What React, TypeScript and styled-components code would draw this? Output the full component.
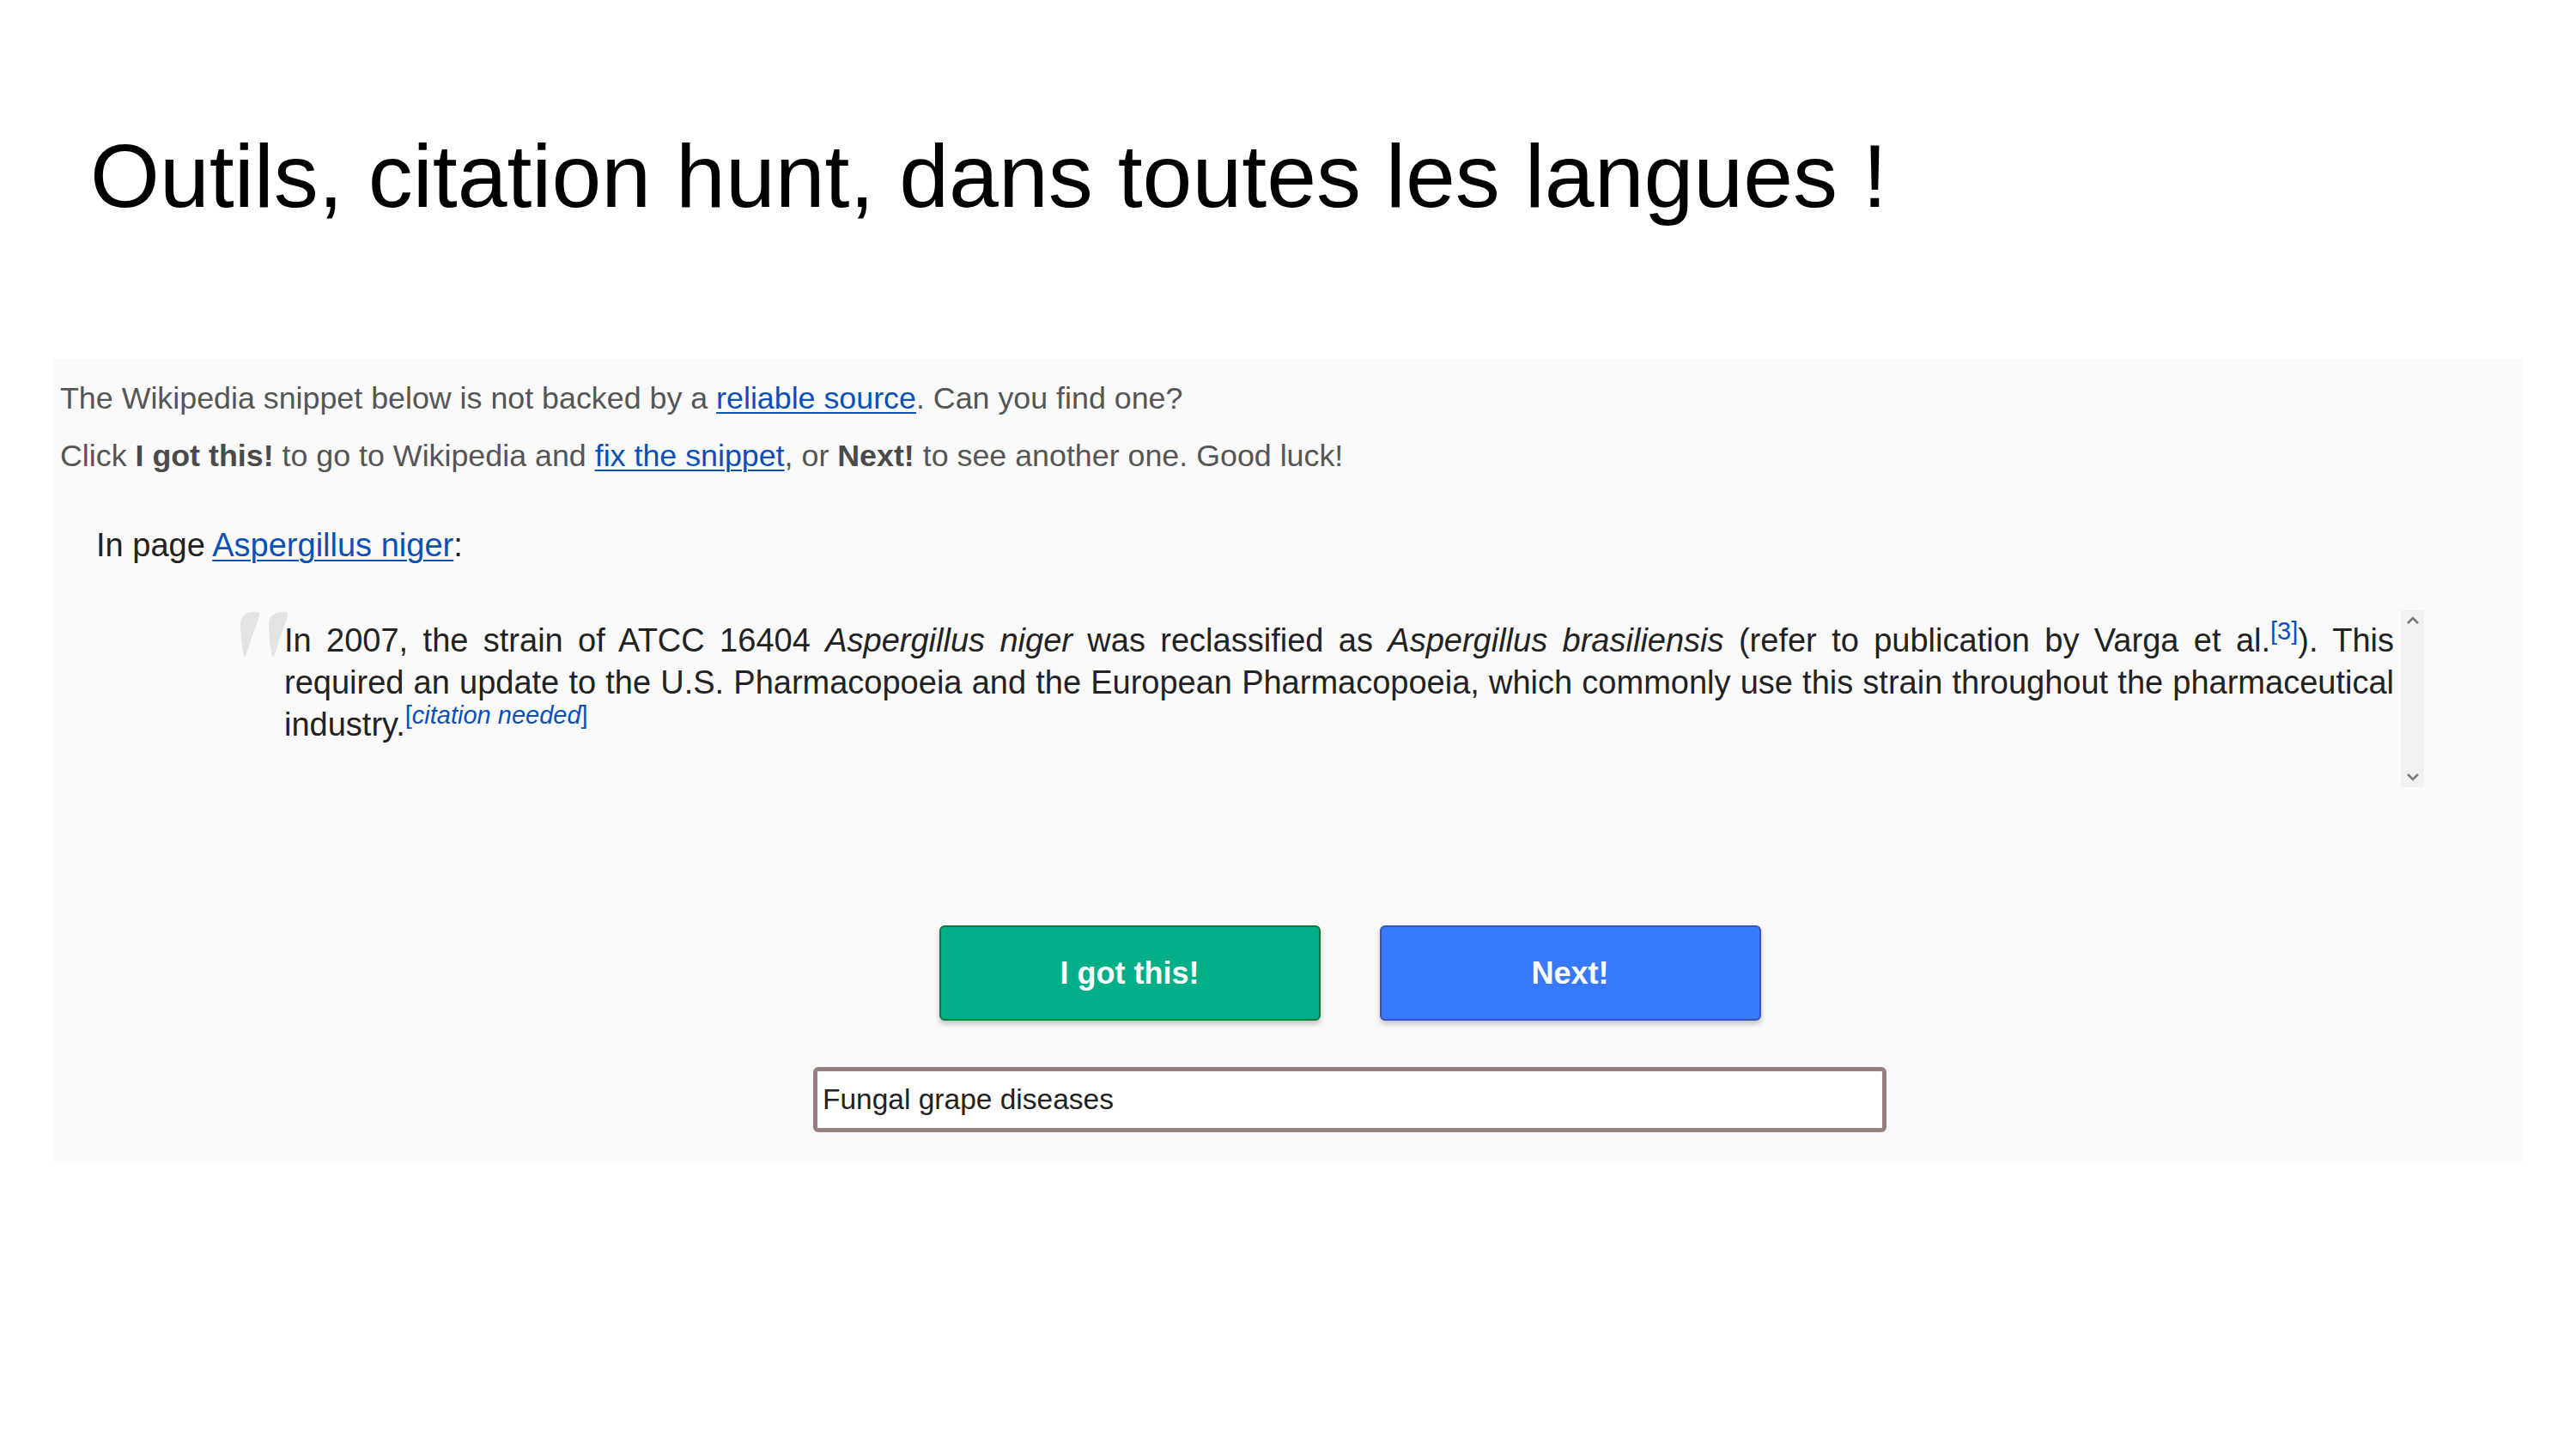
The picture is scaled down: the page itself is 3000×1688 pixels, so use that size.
import React from "react";
import styled, { createGlobalStyle } from "styled-components";

const GlobalStyle = createGlobalStyle`
  html, body {
    margin: 0;
    padding: 0;
    background: #ffffff;
  }
  body {
    font-family: "Liberation Sans", Arial, sans-serif;
  }
`;

const Slide = styled.div`
  width: 3000px;
  height: 1688px;
  box-sizing: border-box;
  padding: 145px 62px 0;
  background: #ffffff;
  font-family: "Liberation Sans", Arial, sans-serif;
`;

const Title = styled.h1`
  margin: 0 0 0 43px;
  font-weight: 400;
  font-size: 104px;
  line-height: 120px;
  color: #000000;
`;

const Panel = styled.section`
  margin-top: 153px;
  background: #fafafa;
  padding: 26px 0 36px 8px;
`;

const Intro = styled.p`
  margin: 0 0 26px;
  font-size: 35.8px;
  line-height: 41px;
  color: #555555;

  b {
    color: #4a4a4a;
  }
`;

const Link = styled.a`
  color: #0b4fb8;
  text-decoration: underline;
  text-underline-offset: 4px;
  text-decoration-thickness: 2px;
`;

const PageLine = styled.p`
  margin: 61px 0 0 42px;
  font-size: 38px;
  line-height: 44px;
  color: #222222;
`;

const SnippetRow = styled.div`
  position: relative;
  display: flex;
  gap: 8px;
  margin: 54px 0 0 261px;
  height: 206px;
`;

const QuoteMark = styled.svg`
  position: absolute;
  left: -56px;
  top: 1px;
  width: 62px;
  height: 54px;
`;

const Quote = styled.blockquote`
  margin: 0;
  width: 2457px;
  height: 206px;
  box-sizing: border-box;
  padding-top: 11px;
  overflow: hidden;
  text-align: justify;
  font-size: 38px;
  line-height: 49px;
  color: #222222;
`;

const Ref = styled.sup`
  font-size: 29px;
  line-height: 0;
  color: #0b4fb8;
  font-style: normal;
`;

const Scrollbar = styled.div`
  width: 27px;
  height: 206px;
  box-sizing: border-box;
  padding: 6px 0;
  background: #f1f1f1;
  display: flex;
  flex-direction: column;
  justify-content: space-between;
  align-items: center;
`;

const Chevron = styled.svg`
  width: 16px;
  height: 11px;
`;

const Controls = styled.div`
  display: flex;
  flex-direction: column;
  align-items: center;
  margin-top: 161px;
  padding-left: 136px;
`;

const ButtonRow = styled.div`
  display: flex;
  gap: 69px;
`;

const ActionButton = styled.button<{ $bg: string; $edge: string }>`
  width: 444px;
  height: 111px;
  box-sizing: border-box;
  border: 2px solid ${(p) => p.$edge};
  border-radius: 6px;
  background: ${(p) => p.$bg};
  color: #ffffff;
  font-family: "Liberation Sans", Arial, sans-serif;
  font-weight: 700;
  font-size: 36px;
  box-shadow: 0 4px 6px rgba(0, 0, 0, 0.22);
  cursor: pointer;
`;

const SearchInput = styled.input`
  margin-top: 54px;
  width: 1250px;
  height: 76px;
  box-sizing: border-box;
  border: 5px solid #968280;
  border-radius: 6px;
  background: #ffffff;
  padding: 0 6px;
  font-family: "Liberation Sans", Arial, sans-serif;
  font-size: 33.5px;
  color: #222222;
  outline: none;
`;

export default function App() {
  return (
    <>
      <GlobalStyle />
      <Slide>
        <Title>Outils, citation hunt, dans toutes les langues !</Title>
        <Panel>
          <Intro>
            The Wikipedia snippet below is not backed by a{" "}
            <Link href="#">reliable source</Link>. Can you find one?
          </Intro>
          <Intro>
            Click <b>I got this!</b> to go to Wikipedia and{" "}
            <Link href="#">fix the snippet</Link>, or <b>Next!</b> to see
            another one. Good luck!
          </Intro>
          <PageLine>
            In page <Link href="#">Aspergillus niger</Link>:
          </PageLine>
          <SnippetRow>
            <QuoteMark viewBox="0 0 62 54">
              <path
                d="M9 5 Q15 0 26 1 Q28 3 26 9 Q18 30 11 53 L9 53 Q5 32 5 15 Q5 8 9 5 Z"
                fill="#e4e4e4"
              />
              <path
                d="M42 5 Q48 0 59 1 Q61 3 59 9 Q51 30 44 53 L42 53 Q38 32 38 15 Q38 8 42 5 Z"
                fill="#e4e4e4"
              />
            </QuoteMark>
            <Quote>
              In 2007, the strain of ATCC 16404 <i>Aspergillus niger</i> was
              reclassified as <i>Aspergillus brasiliensis</i> (refer to
              publication by Varga et al.<Ref>[3]</Ref>). This required an
              update to the U.S. Pharmacopoeia and the European Pharmacopoeia,
              which commonly use this strain throughout the pharmaceutical
              industry.
              <Ref>
                [<i>citation needed</i>]
              </Ref>
            </Quote>
            <Scrollbar>
              <Chevron viewBox="0 0 16 11">
                <polyline
                  points="2,9 8,3 14,9"
                  fill="none"
                  stroke="#7a7a7a"
                  strokeWidth="2.6"
                />
              </Chevron>
              <Chevron viewBox="0 0 16 11">
                <polyline
                  points="2,2 8,8 14,2"
                  fill="none"
                  stroke="#7a7a7a"
                  strokeWidth="2.6"
                />
              </Chevron>
            </Scrollbar>
          </SnippetRow>
          <Controls>
            <ButtonRow>
              <ActionButton $bg="#00ae88" $edge="#17773f">
                I got this!
              </ActionButton>
              <ActionButton $bg="#3679fc" $edge="#3c52b4">
                Next!
              </ActionButton>
            </ButtonRow>
            <SearchInput readOnly value="Fungal grape diseases" />
          </Controls>
        </Panel>
      </Slide>
    </>
  );
}
